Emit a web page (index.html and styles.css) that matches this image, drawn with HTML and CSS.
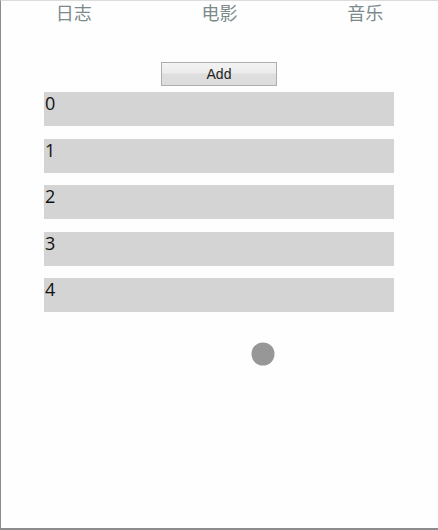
FILE: index.html
```html
<!DOCTYPE html>
<html>
<head>
<meta charset="utf-8">
<link rel="stylesheet" href="styles.css">
</head>
<body>
<div class="page">
  <nav class="tabs">
    <div class="tab">日志</div>
    <div class="tab">电影</div>
    <div class="tab">音乐</div>
  </nav>
  <div class="actions">
    <button class="add-btn">Add</button>
  </div>
  <ul class="list">
    <li class="item">0</li>
    <li class="item">1</li>
    <li class="item">2</li>
    <li class="item">3</li>
    <li class="item">4</li>
  </ul>
  <div class="spinner-wrap">
    <svg class="spinner" width="30" height="30" viewBox="0 0 30 30">
      <g stroke="#c8c8c8" stroke-width="1" stroke-dasharray="1 1.2" fill="none">
        <path d="M4.5 9.5 L8.5 5.5"/>
        <path d="M21.5 5.5 L25.5 9.5"/>
        <path d="M4.5 20.5 L8.5 24.5"/>
        <path d="M21.5 24.5 L25.5 20.5"/>
      </g>
      <circle cx="15" cy="15" r="11.5" fill="#979797"/>
    </svg>
  </div>
</div>
</body>
</html>
```
FILE: styles.css
```css
* { box-sizing: border-box; }
html, body { margin: 0; padding: 0; background: #fefefe; }
.page {
  height: 530px;
  border-left: 1px solid #8c8c8c;
  border-bottom: 2px solid #8c8c8c;
  border-top: 1px solid #dcdcdc;
  font-family: "Open Sans", "Noto Sans CJK SC", sans-serif;
}
.tabs {
  display: grid;
  grid-template-columns: 1fr 1fr 1fr;
  height: 24px;
}
.tab {
  text-align: center;
  font-family: "Noto Sans CJK SC", sans-serif;
  font-size: 18px;
  line-height: 22px;
  color: #7b8a8b;
}
.actions {
  display: flex;
  justify-content: center;
  padding-top: 37px;
}
.add-btn {
  width: 116px;
  height: 24px;
  margin-left: -1px;
  border: 1px solid #adadad;
  border-radius: 0;
  background: linear-gradient(#f3f3f3 0%, #ececec 45%, #dfdfdf 50%, #dcdcdc 100%);
  font-family: "Liberation Sans", Arial, sans-serif;
  font-size: 14px;
  color: #222;
  padding: 0;
}
.list {
  list-style: none;
  margin: 6px 0 0 43px;
  padding: 0;
  width: 350px;
}
.item {
  height: 34px;
  margin-bottom: 12.5px;
  background: #d4d4d4;
  font-size: 18px;
  line-height: 22px;
  padding-left: 1px;
  color: #111;
}
.spinner-wrap {
  display: flex;
  justify-content: center;
  padding-left: 86px;
  margin-top: 27px;
}
```
